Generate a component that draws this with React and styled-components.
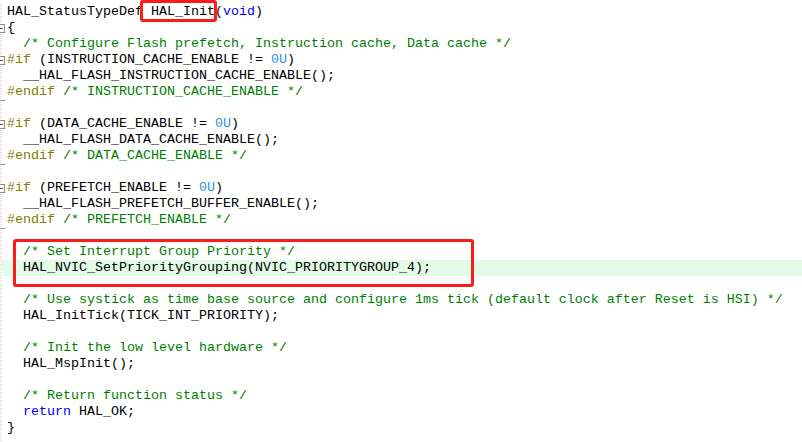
import React from 'react'
import styled, { createGlobalStyle } from 'styled-components'

const Global = createGlobalStyle`
  html, body {
    margin: 0;
    padding: 0;
    background: #ffffff;
  }
`

const Editor = styled.div`
  width: 802px;
  height: 442px;
  overflow: hidden;
  background: #ffffff;
  padding-top: 4px;
  box-sizing: border-box;
  font-family: 'Liberation Mono', 'Courier New', monospace;
  font-size: 13.33px;
  color: #000000;
`

const Row = styled.div`
  display: flex;
  height: 16px;
  line-height: 16px;
  background: ${({ $active }) => ($active ? '#e4fbe8' : 'transparent')};
`

// red annotation drawn round a block of rows
const Group = styled.div`
  position: relative;
  &::after {
    content: '';
    position: absolute;
    left: 13px;
    right: 328px;
    top: -5px;
    bottom: -11px;
    border: 3px solid #ff1a1a;
    border-radius: 3px;
    pointer-events: none;
  }
`

const Gutter = styled.div`
  position: relative;
  flex: 0 0 7px;
  height: 16px;
  background: repeating-linear-gradient(to bottom, #e4e4e4 0 1px, #ffffff 1px 2px) 0 0 / 2px 100% no-repeat;
`

const FoldBox = styled.span`
  position: absolute;
  left: -4px;
  top: 4px;
  width: 7px;
  height: 7px;
  border: 1px solid #8c8c8c;
  background: #ffffff;
  &::after {
    content: '';
    position: absolute;
    left: 1px;
    top: 3px;
    width: 5px;
    height: 1px;
    background: #555;
  }
`

const FoldEnd = styled.span`
  position: absolute;
  left: 0;
  top: 0;
  width: 5px;
  height: 1px;
  background: #9a9a9a;
`

const Code = styled.pre`
  margin: 0;
  font: inherit;
  white-space: pre;
  flex: 1;
`

const Tok = styled.span`
  color: ${({ $t }) =>
    ({
      kw: '#0000ff',
      cm: '#008000',
      pp: '#808000',
      num: '#2f8fd8',
    }[$t] || '#000000')};
`

// red annotation drawn round a single token
const Mark = styled.span`
  position: relative;
  &::after {
    content: '';
    position: absolute;
    left: -3px;
    right: -2px;
    top: -4px;
    bottom: -3px;
    border: 3px solid #ff1a1a;
    border-radius: 3px;
  }
`

const lines = [
  { code: [['', 'HAL_StatusTypeDef'], ['mark', ' HAL_Init'], ['', '('], ['kw', 'void'], ['', ')']] },
  { fold: 'box', code: [['', '{']] },
  { code: [['cm', '  /* Configure Flash prefetch, Instruction cache, Data cache */']] },
  { fold: 'box', code: [['pp', '#if'], ['', ' (INSTRUCTION_CACHE_ENABLE != '], ['num', '0U'], ['', ')']] },
  { code: [['', '  __HAL_FLASH_INSTRUCTION_CACHE_ENABLE();']] },
  { code: [['pp', '#endif'], ['cm', ' /* INSTRUCTION_CACHE_ENABLE */']] },
  { fold: 'end', code: [] },
  { fold: 'box', code: [['pp', '#if'], ['', ' (DATA_CACHE_ENABLE != '], ['num', '0U'], ['', ')']] },
  { code: [['', '  __HAL_FLASH_DATA_CACHE_ENABLE();']] },
  { code: [['pp', '#endif'], ['cm', ' /* DATA_CACHE_ENABLE */']] },
  { fold: 'end', code: [] },
  { fold: 'box', code: [['pp', '#if'], ['', ' (PREFETCH_ENABLE != '], ['num', '0U'], ['', ')']] },
  { code: [['', '  __HAL_FLASH_PREFETCH_BUFFER_ENABLE();']] },
  { code: [['pp', '#endif'], ['cm', ' /* PREFETCH_ENABLE */']] },
  { fold: 'end', code: [] },
  { group: 'start', code: [['cm', '  /* Set Interrupt Group Priority */']] },
  { group: 'end', active: true, code: [['', '  HAL_NVIC_SetPriorityGrouping(NVIC_PRIORITYGROUP_4);']] },
  { code: [] },
  { code: [['cm', '  /* Use systick as time base source and configure 1ms tick (default clock after Reset is HSI) */']] },
  { code: [['', '  HAL_InitTick(TICK_INT_PRIORITY);']] },
  { code: [] },
  { code: [['cm', '  /* Init the low level hardware */']] },
  { code: [['', '  HAL_MspInit();']] },
  { code: [] },
  { code: [['cm', '  /* Return function status */']] },
  { code: [['', '  '], ['kw', 'return'], ['', ' HAL_OK;']] },
  { code: [['', '}']] },
  { code: [] },
]

const Line = ({ line }) => (
  <Row $active={line.active}>
    <Gutter>
      {line.fold === 'box' && <FoldBox />}
      {line.fold === 'end' && <FoldEnd />}
    </Gutter>
    <Code>
      {line.code.length
        ? line.code.map(([t, text], j) =>
            t === 'mark' ? (
              <Mark key={j}>{text}</Mark>
            ) : (
              <Tok key={j} $t={t}>
                {text}
              </Tok>
            )
          )
        : ' '}
    </Code>
  </Row>
)

const App = () => {
  const out = []
  for (let i = 0; i < lines.length; i++) {
    if (lines[i].group === 'start') {
      const block = []
      while (i < lines.length) {
        block.push(<Line key={i} line={lines[i]} />)
        if (lines[i].group === 'end') break
        i++
      }
      out.push(<Group key={'g' + i}>{block}</Group>)
    } else {
      out.push(<Line key={i} line={lines[i]} />)
    }
  }
  return (
    <Editor>
      <Global />
      {out}
    </Editor>
  )
}

export default App
